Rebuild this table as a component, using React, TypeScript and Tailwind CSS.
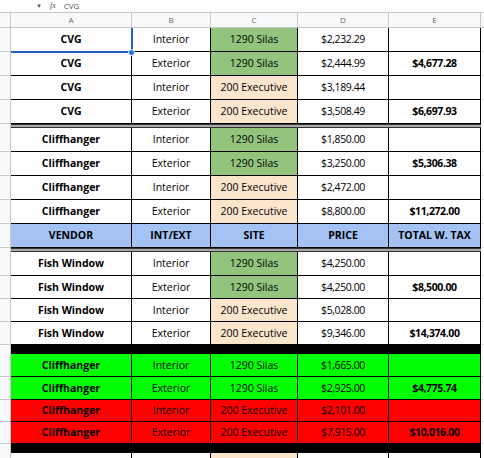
import React from "react";

type Cell = { text: string; bold?: boolean; bg?: string; num?: boolean };

const GREEN = "bg-[#93c47d]";
const PEACH = "bg-[#fce5cd]";

const widths = ["w-[121px]", "w-[79px]", "w-[87px]", "w-[91px]", "w-[92px]"];

function Row({ cells, h, bg = "bg-white" }: { cells: Cell[]; h: string; bg?: string }) {
  return (
    <div className={`flex ${h}`}>
      <div className="h-full w-[11px] shrink-0 border-b border-r border-[#c7c7c7] bg-[#f8f9fa]" />
      {cells.map((c, i) => (
        <div
          key={i}
          className={`flex h-full shrink-0 items-center justify-center border-b border-r border-black pt-[1px] ${widths[i]} ${
            c.bg ?? bg
          } ${c.bold ? "font-bold" : "font-normal"} ${c.num ? "tracking-[-0.4px]" : ""}`}
        >
          {c.text}
        </div>
      ))}
      <div className="h-full flex-1 border-b border-[#e2e2e2] bg-white" />
    </div>
  );
}

function Bar({ kind }: { kind: "double" | "black" }) {
  return (
    <div className={`flex ${kind === "double" ? "h-[4px]" : "h-[9px]"}`}>
      <div className="h-full w-[11px] shrink-0 border-r border-[#c7c7c7] bg-[#f8f9fa]" />
      {kind === "double" ? (
        <div className="h-full w-[470px] shrink-0 border-b border-t border-[#333] bg-[#a9a9a9]" />
      ) : (
        <div className="h-full w-[470px] shrink-0 bg-black" />
      )}
      <div className="h-full flex-1 bg-white" />
    </div>
  );
}

type Data = [string, string, string, string, string];

function dataRow(d: Data, site?: string): Cell[] {
  return [
    { text: d[0], bold: true },
    { text: d[1] },
    { text: d[2], bg: site ?? (d[2] === "1290 Silas" ? GREEN : PEACH) },
    { text: d[3], num: true },
    { text: d[4], bold: true, num: true },
  ];
}

const cvg: Data[] = [
  ["CVG", "Interior", "1290 Silas", "$2,232.29", ""],
  ["CVG", "Exterior", "1290 Silas", "$2,444.99", "$4,677.28"],
  ["CVG", "Interior", "200 Executive", "$3,189.44", ""],
  ["CVG", "Exterior", "200 Executive", "$3,508.49", "$6,697.93"],
];

const cliff: Data[] = [
  ["Cliffhanger", "Interior", "1290 Silas", "$1,850.00", ""],
  ["Cliffhanger", "Exterior", "1290 Silas", "$3,250.00", "$5,306.38"],
  ["Cliffhanger", "Interior", "200 Executive", "$2,472.00", ""],
  ["Cliffhanger", "Exterior", "200 Executive", "$8,800.00", "$11,272.00"],
];

const fish: Data[] = [
  ["Fish Window", "Interior", "1290 Silas", "$4,250.00", ""],
  ["Fish Window", "Exterior", "1290 Silas", "$4,250.00", "$8,500.00"],
  ["Fish Window", "Interior", "200 Executive", "$5,028.00", ""],
  ["Fish Window", "Exterior", "200 Executive", "$9,346.00", "$14,374.00"],
];

export default function App() {
  return (
    <div
      className="relative h-[458px] w-[484px] overflow-hidden bg-white text-[10.5px] text-black"
      style={{ fontFamily: '"Open Sans", "Noto Sans", sans-serif' }}
    >
      {/* formula bar, top edge of the window */}
      <div className="flex h-[12px] items-center gap-[8px] bg-white pl-[36px] text-[8px] leading-[10px] text-[#555]">
        <span className="text-[6px]">▼</span>
        <span className="italic" style={{ fontFamily: '"Liberation Serif", serif' }}>
          fx
        </span>
        <span>CVG</span>
      </div>

      {/* column letters */}
      <div className="flex h-[16px] border-t border-[#c7c7c7] text-[8px] text-[#666]">
        <div className="h-full w-[11px] shrink-0 border-b border-r border-[#c7c7c7] bg-[#f8f9fa]" />
        {["A", "B", "C", "D", "E"].map((l, i) => (
          <div
            key={l}
            className={`flex h-full shrink-0 items-center justify-center border-b border-r border-[#c7c7c7] bg-[#f8f9fa] ${widths[i]}`}
          >
            {l}
          </div>
        ))}
        <div className="h-full flex-1 border-b border-[#c7c7c7] bg-[#f8f9fa]" />
      </div>

      {cvg.map((d, i) => (
        <Row key={"c" + i} h="h-[24px]" cells={dataRow(d)} />
      ))}
      <Bar kind="double" />
      {cliff.map((d, i) => (
        <Row key={"h" + i} h="h-[24px]" cells={dataRow(d)} />
      ))}
      <Row
        h="h-[24px]"
        bg="bg-[#a4c2f4]"
        cells={[
          { text: "VENDOR", bold: true },
          { text: "INT/EXT", bold: true },
          { text: "SITE", bold: true },
          { text: "PRICE", bold: true },
          { text: "TOTAL W. TAX", bold: true },
        ]}
      />
      <Bar kind="double" />
      {fish.map((d, i) => (
        <Row key={"f" + i} h={i === 0 ? "h-[24px]" : "h-[23px]"} cells={dataRow(d)} />
      ))}
      <Bar kind="black" />
      <Row
        h="h-[23px]"
        bg="bg-[#00ff00]"
        cells={dataRow(["Cliffhanger", "Interior", "1290 Silas", "$1,665.00", ""], "bg-[#00ff00]")}
      />
      <Row
        h="h-[23px]"
        bg="bg-[#00ff00]"
        cells={dataRow(["Cliffhanger", "Exterior", "1290 Silas", "$2,925.00", "$4,775.74"], "bg-[#00ff00]")}
      />
      <Row
        h="h-[22px]"
        bg="bg-[#ff0000]"
        cells={dataRow(["Cliffhanger", "Interior", "200 Executive", "$2,101.00", ""], "bg-[#ff0000]")}
      />
      <Row
        h="h-[22px]"
        bg="bg-[#ff0000]"
        cells={dataRow(["Cliffhanger", "Exterior", "200 Executive", "$7,915.00", "$10,016.00"], "bg-[#ff0000]")}
      />
      <Bar kind="black" />
      <Row
        h="h-[24px]"
        cells={[{ text: "" }, { text: "" }, { text: "", bg: PEACH }, { text: "" }, { text: "" }]}
      />

      {/* selection on A1 */}
      <div className="pointer-events-none absolute left-[11px] top-[28px] h-[25px] w-[122px] border-b-2 border-r-2 border-[#1f5fbf]" />
      <div className="pointer-events-none absolute left-[128px] top-[49px] h-[7px] w-[7px] rounded-full border border-white bg-[#1a73e8]" />
    </div>
  );
}
